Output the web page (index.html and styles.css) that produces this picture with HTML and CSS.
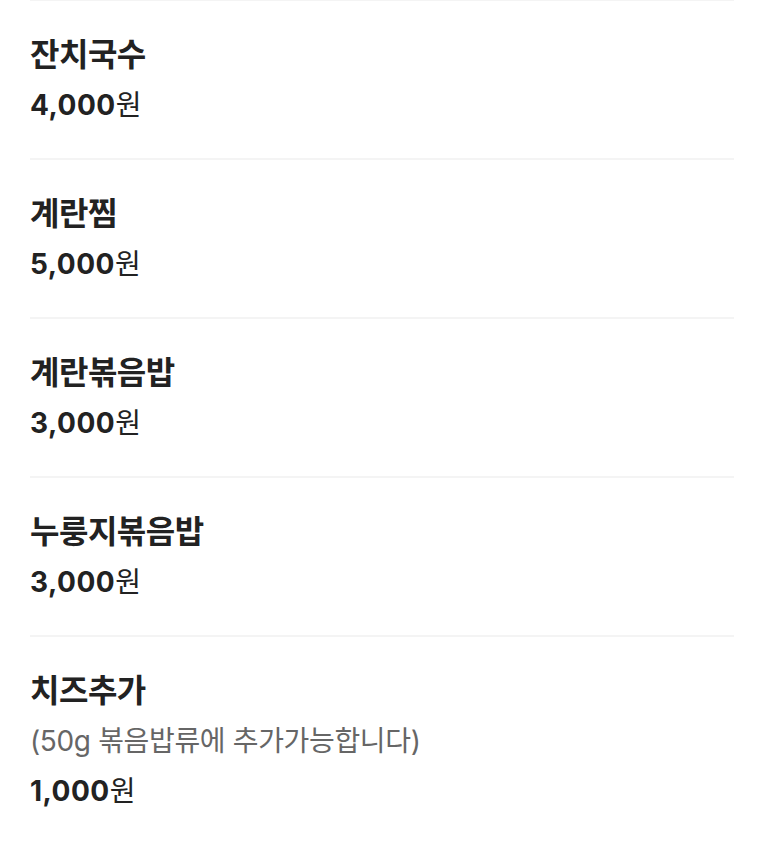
FILE: index.html
```html
<!DOCTYPE html>
<html lang="ko">
<head>
<meta charset="utf-8">
<link rel="stylesheet" href="styles.css">
</head>
<body>
<ul class="menu">
  <li class="item">
    <div class="name">잔치국수</div>
    <div class="price"><b>4,000</b>원</div>
  </li>
  <li class="item">
    <div class="name">계란찜</div>
    <div class="price"><b>5,000</b>원</div>
  </li>
  <li class="item">
    <div class="name">계란볶음밥</div>
    <div class="price"><b>3,000</b>원</div>
  </li>
  <li class="item">
    <div class="name">누룽지볶음밥</div>
    <div class="price"><b>3,000</b>원</div>
  </li>
  <li class="item">
    <div class="name">치즈추가</div>
    <div class="desc">(50g 볶음밥류에 추가가능합니다)</div>
    <div class="price"><b>1,000</b>원</div>
  </li>
</ul>
</body>
</html>
```
FILE: styles.css
```css
html, body {
  margin: 0;
  padding: 0;
  background: #fff;
}
body {
  font-family: Inter, "Noto Sans CJK KR", sans-serif;
  color: #222;
}
.menu {
  list-style: none;
  margin: -1px 28px 0 30px;
  padding: 0;
}
.item {
  border-top: 2px solid #f4f4f4;
  padding: 29px 0 28px;
}
.name {
  font-size: 32px;
  font-weight: 700;
  line-height: 50px;
  letter-spacing: -0.5px;
}
.desc {
  font-size: 28px;
  line-height: 50px;
  color: #666;
  letter-spacing: -0.35px;
}
.price {
  font-size: 28px;
  line-height: 50px;
  font-weight: 400;
  letter-spacing: 0.5px;
}
.price b {
  font-weight: 700;
}
```
